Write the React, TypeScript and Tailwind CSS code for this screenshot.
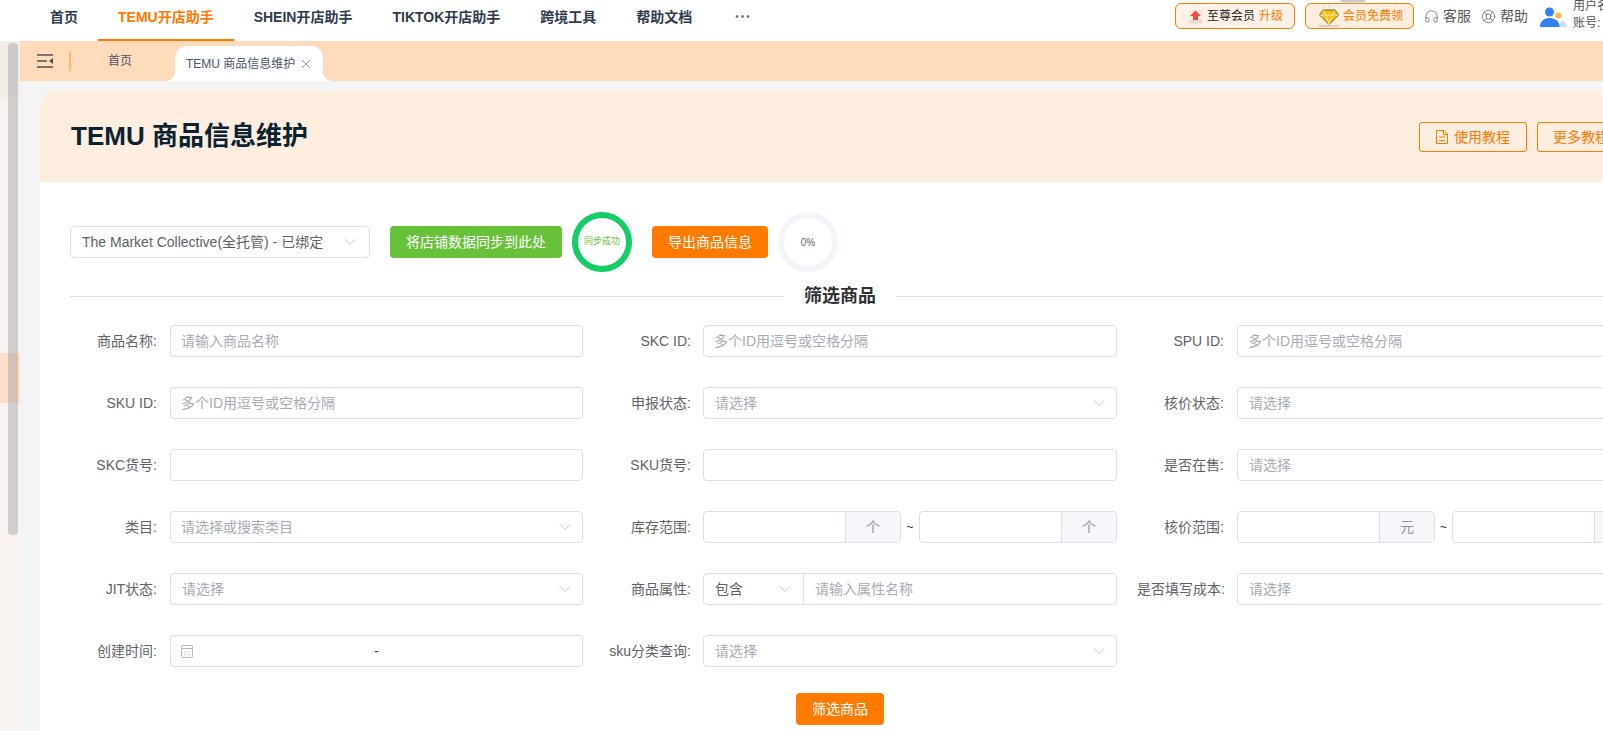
import React from "react";
import { ChevronDown, X, Headphones, LifeBuoy } from "lucide-react";

const FONT = "font-['Liberation_Sans','Noto_Sans_CJK_SC',sans-serif]";
const box = "h-8 border border-[#dcdfe6] rounded-[4px] bg-white flex items-center text-sm";

function Chevron() {
  return <ChevronDown size={20} strokeWidth={0.9} className="text-[#b4b8c0] shrink-0" />;
}

function TextField({ ph }: { ph?: string }) {
  return <div className={`${box} w-[413px] pl-[10px] text-[#a8abb2]`}>{ph}</div>;
}

function SelectField({ ph, small }: { ph: string; small?: boolean }) {
  return (
    <div className={`${box} w-[413px] ${small ? "pl-[10px]" : "pl-[11px]"} pr-[7px] justify-between text-[#a8abb2]`}>
      <span>{ph}</span>
      <Chevron />
    </div>
  );
}

function Unit({ u }: { u: string }) {
  return (
    <div className={`${box} w-[198px] overflow-hidden`}>
      <div className="flex-1" />
      <div className="w-[55px] h-full bg-[#f5f7fa] border-l border-[#dcdfe6] flex items-center justify-center text-[#909399]">{u}</div>
    </div>
  );
}

function Range({ u }: { u: string }) {
  return (
    <div className="flex items-center w-[413px] justify-between">
      <Unit u={u} />
      <span className="text-xs text-[#333]">~</span>
      <Unit u={u} />
    </div>
  );
}

function Field({ label, mid, children }: { label: string; mid?: boolean; children: React.ReactNode }) {
  return (
    <div className={`flex items-center h-8 ${mid ? "[&>div:last-child]:w-[414px]" : ""}`}>
      <div className={`w-[87px] ${mid ? "mr-[12px]" : "mr-[13px]"} text-right text-sm text-[#606266] whitespace-nowrap`}>{label}:</div>
      {children}
    </div>
  );
}

function NavItem({ t, active }: { t: string; active?: boolean }) {
  return (
    <div className={`h-[41px] px-5 flex items-center text-sm font-bold border-b-2 whitespace-nowrap pb-[6px] ${active ? "text-[#ff7a00] border-[#ff7a00]" : "text-[#303a4d] border-transparent"}`}>
      {t}
    </div>
  );
}

function Ring({ color, text, textClass }: { color: string; text: string; textClass: string }) {
  return (
    <div className="relative w-[60px] h-[60px] flex items-center justify-center">
      <svg width="60" height="60" viewBox="0 0 60 60" className="absolute inset-0">
        <circle cx="30" cy="30" r="27" fill="none" stroke={color} strokeWidth="6" />
      </svg>
      <span className={textClass}>{text}</span>
    </div>
  );
}

function HamburgerIcon() {
  return (
    <svg width="16" height="14" viewBox="0 0 16 14" fill="none" stroke="#4d5158" strokeWidth="1.5">
      <path d="M0 1h16M0 7h10M0 13h16" />
      <path d="M16 4v6l-4-3z" fill="#4d5158" stroke="none" />
    </svg>
  );
}

function DocIcon() {
  return (
    <svg width="12" height="14" viewBox="0 0 12 14" fill="none" stroke="#ff7a00" strokeWidth="1" className="shrink-0">
      <path d="M.5.500h7.500l3.500 3.500v9.500h-11z" />
      <path d="M7.500.500v4h4M3 7h6M3 10.500h6" />
    </svg>
  );
}

function CalendarIcon() {
  return (
    <svg width="12" height="13" viewBox="0 0 12 13" fill="none" stroke="#b4b8c0" strokeWidth="1" className="shrink-0">
      <rect x="0.500" y="0.500" width="11" height="12" rx="1" />
      <path d="M.5 3.500h11" />
      <path d="M3 7h1M5.500 7h1M8 7h1M3 9.500h1M5.500 9.500h1M8 9.500h1" strokeWidth="0.8" />
    </svg>
  );
}

function UpgradeIcon() {
  return (
    <svg width="15" height="15" viewBox="0 0 15 15" className="shrink-0">
      <rect x="0.5" y="0.5" width="14" height="14" rx="2.5" fill="#f6e9e2" />
      <rect x="0.5" y="11" width="14" height="3.5" rx="1.5" fill="#e4dcd6" />
      <path d="M7.5 1.5 13 7H10v4H5V7H2z" fill="#ec4a3f" />
    </svg>
  );
}

function GemIcon() {
  return (
    <svg width="22" height="22" viewBox="0 0 22 22" className="shrink-0">
      <circle cx="6" cy="2" r="0.8" fill="#f8d94e" />
      <circle cx="11" cy="1.5" r="0.7" fill="#9ec7e8" />
      <path d="M5 5h12l3.5 5L11 19.500 1.500 10z" fill="#f3c11c" stroke="#75621c" strokeWidth="1" />
      <path d="M1.5 10h19M5 5l3 5 3 9.500 3-9.500 3-5" fill="none" stroke="#fff3b0" strokeWidth="0.8" />
      <path d="M1 21h20" stroke="#a09a88" strokeWidth="0.7" />
    </svg>
  );
}

function AvatarIcon() {
  return (
    <svg width="27" height="20" viewBox="0 0 27 20" className="shrink-0">
      <path d="M19 20h7.500c0-3.500-2-6-5-6.500-1.500 1.500-2.500 3.500-2.500 6.500z" fill="#c9def8" />
      <circle cx="18.500" cy="8.500" r="3" fill="#f9b14b" />
      <circle cx="9.500" cy="5" r="4.500" fill="#2f80f2" />
      <path d="M0 20c0-5.500 3.500-9 9.500-9s10 3.500 10 9z" fill="#2f80f2" />
    </svg>
  );
}

export default function App() {
  return (
    <div className={`${FONT} w-[1603px] h-[731px] overflow-hidden relative bg-[#f4f4f4]`}>
      {/* top nav */}
      <div className="h-[41px] bg-white flex items-start w-[1680px]">
        <div className="flex w-[1175px] shrink-0 pl-[30px]">
          <NavItem t="首页" />
          <NavItem t="TEMU开店助手" active />
          <NavItem t="SHEIN开店助手" />
          <NavItem t="TIKTOK开店助手" />
          <NavItem t="跨境工具" />
          <NavItem t="帮助文档" />
          <div className="h-[41px] flex items-center pl-[23px] pb-[8px] text-[10px] text-[#6f7480] tracking-[2px]">•••</div>
        </div>
        <div className="flex items-center h-[32px] text-[12px] whitespace-nowrap">
          <div className="w-[120px] h-[26px] rounded-[6px] border border-[#ff7a00] bg-[#fff1e8] flex items-center pl-[12px] gap-[4px]">
            <UpgradeIcon />
            <span className="text-[#222]">至尊会员</span>
            <span className="text-[#ff7a00]">升级</span>
          </div>
          <div className="ml-[10px] w-[109px] h-[26px] rounded-[6px] border border-[#ff7a00] bg-[#ffeedd] flex items-center pl-[12px] gap-[3px]">
            <GemIcon />
            <span className="text-[#ff7a00]">会员免费领</span>
          </div>
          <Headphones size={15} strokeWidth={1.1} className="ml-[10px] text-[#555]" />
          <span className="ml-[4px] text-[#555] text-[14px]">客服</span>
          <LifeBuoy size={15} strokeWidth={1.1} className="ml-[10px] text-[#555]" />
          <span className="ml-[4px] text-[#555] text-[14px]">帮助</span>
          <span className="ml-[12px] mt-[1px]"><AvatarIcon /></span>
          <div className="ml-[6px] text-[12px] leading-[17px] text-[#555] -mt-[3px]">
            <div>用户名</div>
            <div>账号:</div>
          </div>
        </div>
      </div>
      <div className="absolute left-[1340px] -top-[3px] w-[26px] h-[6px] rounded-full bg-[#c8c8c8] blur-[1px]" />

      <div className="flex h-[690px]">
        {/* left rail */}
        <div className="w-5 shrink-0 bg-[#f8f3f0] flex flex-col">
          <div className="h-[56px] bg-[#f5ece6]" />
          <div className="h-[256px]" />
          <div className="h-[50px] bg-[#fde0cb]" />
        </div>

        <div className="flex-1 min-w-0">
          {/* tabs */}
          <div className="h-10 w-[1600px] bg-[#fddbbb] flex items-end">
            <div className="h-full flex items-center pb-[1px] pl-[17px]"><HamburgerIcon /></div>
            <div className="ml-[16px] w-[2px] h-5 bg-[#fdb874] mb-[10px]" />
            <div className="w-[104px] h-full flex items-center justify-center text-xs text-[#4a5568] pr-[6px]">首页</div>
            <div className="relative h-[35px] w-[148px] bg-white rounded-t-[12px] flex items-center pl-[11px] text-xs text-[#4a5568] whitespace-nowrap">
              <span className="absolute -left-[10px] bottom-0 w-[10px] h-[8px] bg-[radial-gradient(ellipse_10px_8px_at_0_0,transparent_98%,white_100%)]" />
              <span className="absolute -right-[10px] bottom-0 w-[10px] h-[8px] bg-[radial-gradient(ellipse_10px_8px_at_100%_0,transparent_98%,white_100%)]" />
              TEMU 商品信息维护
              <X size={14} strokeWidth={1} className="ml-[4px] text-[#4a5568]" />
            </div>
          </div>

          {/* card */}
          <div className="pt-[10px] pl-5">
            <div className="w-[1600px] rounded-t-[16px] overflow-hidden bg-white h-[640px]">
              <div className="h-[91px] bg-[#feeee0] flex items-center justify-between pl-[31px] pr-[15px]">
                <div className="text-[26px] font-bold text-[#0b2230] leading-none -mt-[2px]">TEMU 商品信息维护</div>
                <div className="flex gap-[10px]">
                  <div className="h-[30px] w-[108px] rounded-[3px] border border-[#ff7a00] text-[#ff7a00] text-sm flex items-center justify-center gap-[6px]">
                    <DocIcon />
                    使用教程
                  </div>
                  <div className="h-[30px] w-[88px] rounded-[3px] border border-[#ff7a00] text-[#ff7a00] text-sm flex items-center justify-center whitespace-nowrap">
                    更多教程
                  </div>
                </div>
              </div>

              <div className="px-[30px] pt-[30px]">
                <div className="flex items-center h-[60px]">
                  <div className="w-[300px] h-8 border border-[#dcdfe6] rounded-[4px] flex items-center justify-between pl-[11px] pr-[9px] text-sm text-[#606266] whitespace-nowrap">
                    The Market Collective(全托管) - 已绑定
                    <Chevron />
                  </div>
                  <div className="ml-[20px] w-[172px] h-8 rounded-[4px] bg-[#67c23a] text-white text-sm flex items-center justify-center">将店铺数据同步到此处</div>
                  <div className="ml-[10px]"><Ring color="#13ce66" text="同步成功" textClass="text-[9px] text-[#67c23a] whitespace-nowrap" /></div>
                  <div className="ml-[20px] w-[116px] h-8 rounded-[4px] bg-[#ff7a00] text-white text-sm flex items-center justify-center">导出商品信息</div>
                  <div className="ml-[10px]"><Ring color="#f3f5fa" text="0%" textClass="text-[10px] text-[#606266]" /></div>
                </div>

                <div className="mt-3 h-6 w-[1540px] relative flex items-center justify-center">
                  <div className="absolute left-0 right-0 top-[12px] h-px bg-[#dcdfe6]" />
                  <div className="relative bg-white px-5 text-[18px] font-bold text-[#303133] leading-6">筛选商品</div>
                </div>

                <div className="mt-[17px] grid grid-cols-[534px_533px_533px] gap-y-[30px] whitespace-nowrap">
                  <Field label="商品名称"><TextField ph="请输入商品名称" /></Field>
                  <Field mid label="SKC ID"><TextField ph="多个ID用逗号或空格分隔" /></Field>
                  <Field label="SPU ID"><TextField ph="多个ID用逗号或空格分隔" /></Field>

                  <Field label="SKU ID"><TextField ph="多个ID用逗号或空格分隔" /></Field>
                  <Field mid label="申报状态"><SelectField ph="请选择" /></Field>
                  <Field label="核价状态"><SelectField ph="请选择" /></Field>

                  <Field label="SKC货号"><TextField /></Field>
                  <Field mid label="SKU货号"><TextField /></Field>
                  <Field label="是否在售"><SelectField ph="请选择" /></Field>

                  <Field label="类目"><SelectField ph="请选择或搜索类目" small /></Field>
                  <Field mid label="库存范围"><Range u="个" /></Field>
                  <Field label="核价范围"><Range u="元" /></Field>

                  <Field label="JIT状态"><SelectField ph="请选择" /></Field>
                  <Field mid label="商品属性">
                    <div className={`${box} w-[413px]`}>
                      <div className="w-[100px] h-full pl-[11px] pr-[8px] flex items-center justify-between border-r border-[#dcdfe6] text-[#606266]">
                        包含
                        <Chevron />
                      </div>
                      <div className="pl-[11px] text-[#a8abb2]">请输入属性名称</div>
                    </div>
                  </Field>
                  <Field label="是否填写成本"><SelectField ph="请选择" /></Field>

                  <Field label="创建时间">
                    <div className={`${box} w-[413px] pl-[10px]`}>
                      <CalendarIcon />
                      <div className="flex-1 text-center text-[#303133] pr-[22px]">-</div>
                    </div>
                  </Field>
                  <Field mid label="sku分类查询"><SelectField ph="请选择" /></Field>
                </div>

                <div className="mt-[26px] flex justify-center w-[1540px]">
                  <div className="w-[88px] h-8 rounded-[4px] bg-[#ff7a00] text-white text-sm flex items-center justify-center">筛选商品</div>
                </div>
              </div>
            </div>
          </div>
        </div>
      </div>

      {/* overlay scrollbar */}
      <div className="absolute left-2 top-[43px] w-[10px] h-[492px] rounded-[4px] bg-[rgba(120,122,135,0.3)]" />
    </div>
  );
}
